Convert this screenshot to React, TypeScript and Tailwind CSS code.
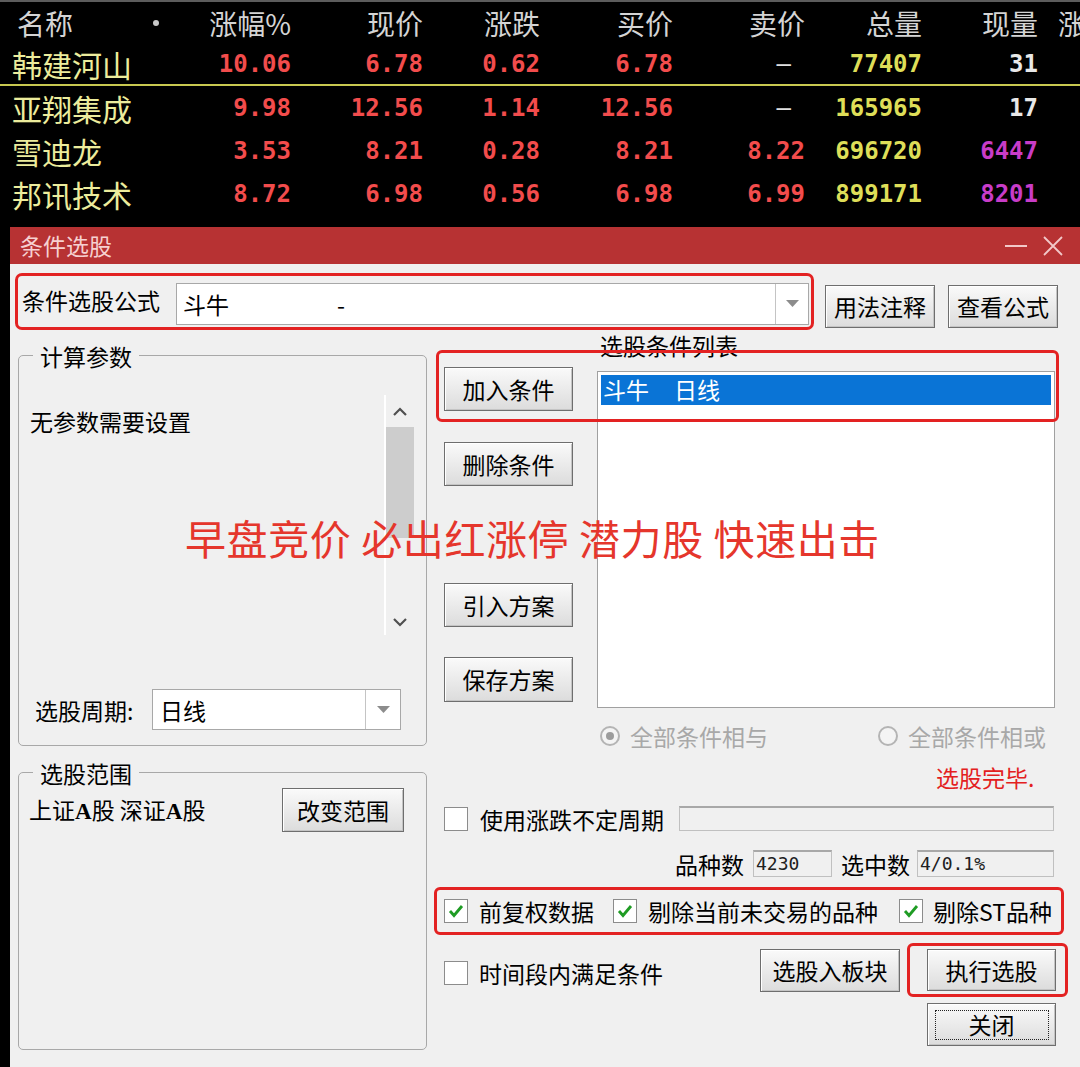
import React from 'react';

const rows = [
  { name: '韩建河山', zf: '10.06', xj: '6.78', zd: '0.62', mr: '6.78', mc: '—', zl: '77407', xl: '31', xlc: 'text-[#e8e8e8]' },
  { name: '亚翔集成', zf: '9.98', xj: '12.56', zd: '1.14', mr: '12.56', mc: '—', zl: '165965', xl: '17', xlc: 'text-[#e8e8e8]' },
  { name: '雪迪龙', zf: '3.53', xj: '8.21', zd: '0.28', mr: '8.21', mc: '8.22', zl: '696720', xl: '6447', xlc: 'text-[#c83cc8]' },
  { name: '邦讯技术', zf: '8.72', xj: '6.98', zd: '0.56', mr: '6.98', mc: '6.99', zl: '899171', xl: '8201', xlc: 'text-[#c83cc8]' },
];

const GRID = 'grid grid-cols-[160px_131px_132px_117px_133px_132px_117px_116px_1fr] items-center';
const NUM = "font-['DejaVu_Sans_Mono',monospace] font-bold text-[24px] text-right whitespace-nowrap";

function Table() {
  return (
    <div className="flex flex-col h-[215px] shrink-0">
      <div className={`${GRID} h-[43px] border-t-2 border-[#5c5c5c] text-[28px] text-[#d4d4d4] whitespace-nowrap`}>
        <div className="flex items-center justify-between pl-[17px] pr-[1px]">
          <span>名称</span>
          <span className="w-[6px] h-[6px] rounded-full bg-[#c8c8c8]"></span>
        </div>
        <div className="text-right">涨幅%</div>
        <div className="text-right">现价</div>
        <div className="text-right">涨跌</div>
        <div className="text-right">买价</div>
        <div className="text-right">卖价</div>
        <div className="text-right">总量</div>
        <div className="text-right">现量</div>
        <div className="pl-[20px] overflow-hidden">涨</div>
      </div>
      {rows.map((r, i) => (
        <div key={i} className={`${GRID} h-[43px] ${i === 0 ? 'border-b-2 border-[#c8c850]' : ''}`}>
          <div className="pl-[12px] text-[30px] text-[#ecec9c] whitespace-nowrap leading-none">{r.name}</div>
          <div className={`${NUM} text-[#f24c4c]`}>{r.zf}</div>
          <div className={`${NUM} text-[#f24c4c]`}>{r.xj}</div>
          <div className={`${NUM} text-[#f24c4c]`}>{r.zd}</div>
          <div className={`${NUM} text-[#f24c4c]`}>{r.mr}</div>
          <div className={`${NUM} ${r.mc === '—' ? 'text-[#e0e0e0] pr-[14px] font-normal' : 'text-[#f24c4c]'}`}>{r.mc}</div>
          <div className={`${NUM} text-[#dede58]`}>{r.zl}</div>
          <div className={`${NUM} ${r.xlc}`}>{r.xl}</div>
          <div></div>
        </div>
      ))}
    </div>
  );
}

function Btn({ className, children }: { className: string; children: React.ReactNode }) {
  return (
    <div
      className={`flex items-center justify-center shrink-0 border border-[#6e6e6e] bg-linear-to-b from-[#fafafa] to-[#dcdcdc] shadow-[inset_1px_1px_0_#ffffff,inset_-1px_-1px_0_#c4c4c4] text-[23px] leading-none text-black ${className}`}
    >
      {children}
    </div>
  );
}

function Arrow() {
  return (
    <svg width="13" height="8" viewBox="0 0 13 8">
      <path d="M0 0 L13 0 L6.5 7 Z" fill="#8c8c8c" />
    </svg>
  );
}

function Check({ checked }: { checked?: boolean }) {
  return (
    <div className="w-[24px] h-[24px] shrink-0 border border-[#8c8c8c] bg-white flex items-center justify-center">
      {checked && (
        <svg width="16" height="14" viewBox="0 0 16 14">
          <path d="M2 7 L6 11.5 L14 2" stroke="#1f9c24" strokeWidth="2.8" fill="none" />
        </svg>
      )}
    </div>
  );
}

function Radio({ dot }: { dot?: boolean }) {
  return (
    <div className="w-[20px] h-[20px] shrink-0 rounded-full border-2 border-[#b4b4b4] bg-[#f4f4f4] flex items-center justify-center">
      {dot && <div className="w-[8px] h-[8px] rounded-full bg-[#9c9c9c]"></div>}
    </div>
  );
}

function Field({ className, children }: { className: string; children?: React.ReactNode }) {
  return (
    <div className={`shrink-0 border border-[#c0c0c0] border-t-2 border-t-[#a8a8a8] bg-[#f0f0f0] flex items-center font-['DejaVu_Sans_Mono',monospace] text-[18px] text-[#202020] ${className}`}>
      {children}
    </div>
  );
}

function TitleBar() {
  return (
    <div className="h-[37px] shrink-0 bg-[#b73233] flex items-center justify-between pl-[10px] pr-[17px]">
      <span className="text-[23px] leading-none text-[#f6d0d0]">条件选股</span>
      <div className="flex items-center gap-[16px]">
        <svg width="22" height="4" viewBox="0 0 22 4">
          <path d="M0 2 H22" stroke="#f2c8c8" strokeWidth="2" />
        </svg>
        <svg width="20" height="20" viewBox="0 0 20 20">
          <path d="M1 1 L19 19 M19 1 L1 19" stroke="#f2c8c8" strokeWidth="1.8" />
        </svg>
      </div>
    </div>
  );
}

function Group({ title, className, children }: { title: string; className: string; children?: React.ReactNode }) {
  return (
    <div className={`relative border border-[#a8a8a8] rounded-[5px] ${className}`}>
      <span className="absolute left-[14px] top-[-13px] px-[7px] bg-[#f0f0f0] text-[23px] leading-[26px]">{title}</span>
      {children}
    </div>
  );
}

function Body() {
  return (
    <div className="relative flex-1 bg-[#f0f0f0] flex flex-col text-[23px] leading-[26px]">
      {/* formula row */}
      <div className="mt-[9px] flex items-start">
        <div className="ml-[5px] w-[799px] h-[57px] border-[3px] border-[#e32222] rounded-[7px] flex items-start pl-[4px]">
          <div className="w-[154px] shrink-0 mt-[11px] whitespace-nowrap">条件选股公式</div>
          <div className="mt-[7px] w-[633px] h-[42px] border border-[#a8a8a8] bg-white flex">
            <div className="flex-1 flex items-center pl-[6px]">
              <span>斗牛</span>
              <span className="ml-[108px]">-</span>
            </div>
            <div className="w-[33px] border-l border-[#c4c4c4] flex items-center justify-center">
              <Arrow />
            </div>
          </div>
        </div>
        <Btn className="ml-[11px] mt-[12px] w-[110px] h-[43px]">用法注释</Btn>
        <Btn className="ml-[13px] mt-[12px] w-[110px] h-[43px]">查看公式</Btn>
      </div>

      <div className="flex">
        {/* left column */}
        <div className="ml-[8px] w-[409px] shrink-0 flex flex-col">
          <Group title="计算参数" className="mt-[25px] h-[391px] flex flex-col">
            <div className="mt-[39px] flex">
              <div className="flex-1 pl-[11px] pt-[14px] leading-[24px]">无参数需要设置</div>
              <div className="w-[30px] h-[240px] mr-[12px] border-l-2 border-white flex flex-col items-center">
                <svg className="mt-[12px]" width="14" height="10" viewBox="0 0 14 10">
                  <path d="M1 8 L7 2 L13 8" stroke="#505050" strokeWidth="2.2" fill="none" />
                </svg>
                <div className="mt-[10px] w-[28px] h-[111px] bg-[#cdcdcd]"></div>
                <div className="flex-1"></div>
                <svg className="mb-[8px]" width="14" height="10" viewBox="0 0 14 10">
                  <path d="M1 2 L7 8 L13 2" stroke="#505050" strokeWidth="2.2" fill="none" />
                </svg>
              </div>
            </div>
            <div className="mt-[54px] flex items-center h-[41px]">
              <div className="pl-[16px] w-[133px] shrink-0 whitespace-nowrap">选股周期:</div>
              <div className="w-[249px] h-[41px] border border-[#a8a8a8] bg-white flex">
                <div className="flex-1 flex items-center pl-[7px]">日线</div>
                <div className="w-[35px] border-l border-[#c4c4c4] flex items-center justify-center">
                  <Arrow />
                </div>
              </div>
            </div>
          </Group>
          <Group title="选股范围" className="mt-[26px] h-[278px]">
            <div className="mt-[15px] flex items-center h-[44px]">
              <div className="flex-1 pl-[10px] whitespace-nowrap">
                上证<span className="font-['Liberation_Serif',serif] font-bold">A</span>股 深证<span className="font-['Liberation_Serif',serif] font-bold">A</span>股
              </div>
              <Btn className="w-[122px] h-[44px] mr-[22px]">改变范围</Btn>
            </div>
          </Group>
        </div>

        {/* right column */}
        <div className="ml-[7px] w-[646px] shrink-0 flex flex-col">
          <div className="relative flex h-[378px]">
            <div className="ml-[10px] w-[129px] shrink-0 flex flex-col pt-[37px]">
              <Btn className="w-[129px] h-[44px]">加入条件</Btn>
              <Btn className="mt-[31px] w-[129px] h-[44px]">删除条件</Btn>
              <Btn className="mt-[97px] w-[129px] h-[44px]">引入方案</Btn>
              <Btn className="mt-[30px] w-[129px] h-[45px]">保存方案</Btn>
            </div>
            <div className="ml-[24px] w-[458px] shrink-0 flex flex-col">
              <div className="mt-[3px] leading-[25px] pl-[3px]">选股条件列表</div>
              <div className="mt-[13px] h-[337px] border border-[#a0a0a0] bg-white p-[3px]">
                <div className="h-[30px] bg-[#0a74d6] text-white leading-[28px] pl-[2px] flex">
                  <span>斗牛</span>
                  <span className="ml-[25px]">日线</span>
                </div>
              </div>
            </div>
            <div className="absolute left-[2px] top-[20px] w-[623px] h-[72px] border-[3px] border-[#e32222] rounded-[6px] pointer-events-none"></div>
          </div>

          <div className="mt-[18px] h-[20px] flex items-center text-[#a8a8a8] whitespace-nowrap">
            <div className="ml-[166px]"><Radio dot /></div>
            <span className="ml-[10px]">全部条件相与</span>
            <div className="ml-[110px]"><Radio /></div>
            <span className="ml-[10px]">全部条件相或</span>
          </div>

          <div className="mt-[18px] ml-[502px] text-[#e32020] whitespace-nowrap">选股完毕.</div>

          <div className="mt-[16px] h-[25px] flex items-center whitespace-nowrap">
            <div className="ml-[10px]"><Check /></div>
            <span className="ml-[12px] w-[187px] shrink-0">使用涨跌不定周期</span>
            <Field className="ml-[12px] w-[375px] h-[25px]" />
          </div>

          <div className="mt-[19px] h-[27px] flex items-center whitespace-nowrap">
            <span className="ml-[241px] w-[69px] shrink-0">品种数</span>
            <Field className="ml-[9px] w-[79px] h-[27px] pl-[2px]">4230</Field>
            <span className="ml-[9px] w-[69px] shrink-0">选中数</span>
            <Field className="ml-[7px] w-[137px] h-[27px] pl-[2px]">4/0.1%</Field>
          </div>

          <div className="mt-[10px] w-[630px] h-[48px] border-[3px] border-[#e32222] rounded-[6px] flex items-center pl-[7px] whitespace-nowrap">
            <Check checked />
            <span className="ml-[11px]">前复权数据</span>
            <div className="ml-[19px]"><Check checked /></div>
            <span className="ml-[11px]">剔除当前未交易的品种</span>
            <div className="ml-[21px]"><Check checked /></div>
            <span className="ml-[10px]">剔除ST品种</span>
          </div>

          <div className="mt-[8px] h-[54px] flex items-center whitespace-nowrap">
            <div className="w-[326px] shrink-0 flex items-center pt-[6px]">
              <div className="ml-[10px]"><Check /></div>
              <span className="ml-[11px]">时间段内满足条件</span>
            </div>
            <Btn className="w-[140px] h-[43px]">选股入板块</Btn>
            <div className="relative ml-[27px]">
              <Btn className="w-[129px] h-[42px]">执行选股</Btn>
              <div className="absolute left-[-20px] top-[-6px] w-[161px] h-[54px] border-[3px] border-[#e32222] rounded-[6px] pointer-events-none"></div>
            </div>
          </div>

          <Btn className="mt-[6px] ml-[493px] w-[129px] h-[43px]">
            <div className="w-[114px] h-[30px] border border-dotted border-[#222222] flex items-center justify-center">关闭</div>
          </Btn>
        </div>
      </div>

      <div className="absolute left-[175px] top-[248px] text-[41px] leading-[50px] tracking-[0.6px] text-[#e5362c] whitespace-nowrap pointer-events-none">
        早盘竞价 必出红涨停 潜力股 快速出击
      </div>
    </div>
  );
}

export default function App() {
  return (
    <div className="w-[1080px] h-[1067px] bg-black overflow-hidden flex flex-col font-['Noto_Sans_CJK_SC','Noto_Sans',sans-serif] text-black">
      <Table />
      <div className="mt-[12px] ml-[10px] flex-1 flex flex-col">
        <TitleBar />
        <Body />
      </div>
    </div>
  );
}
